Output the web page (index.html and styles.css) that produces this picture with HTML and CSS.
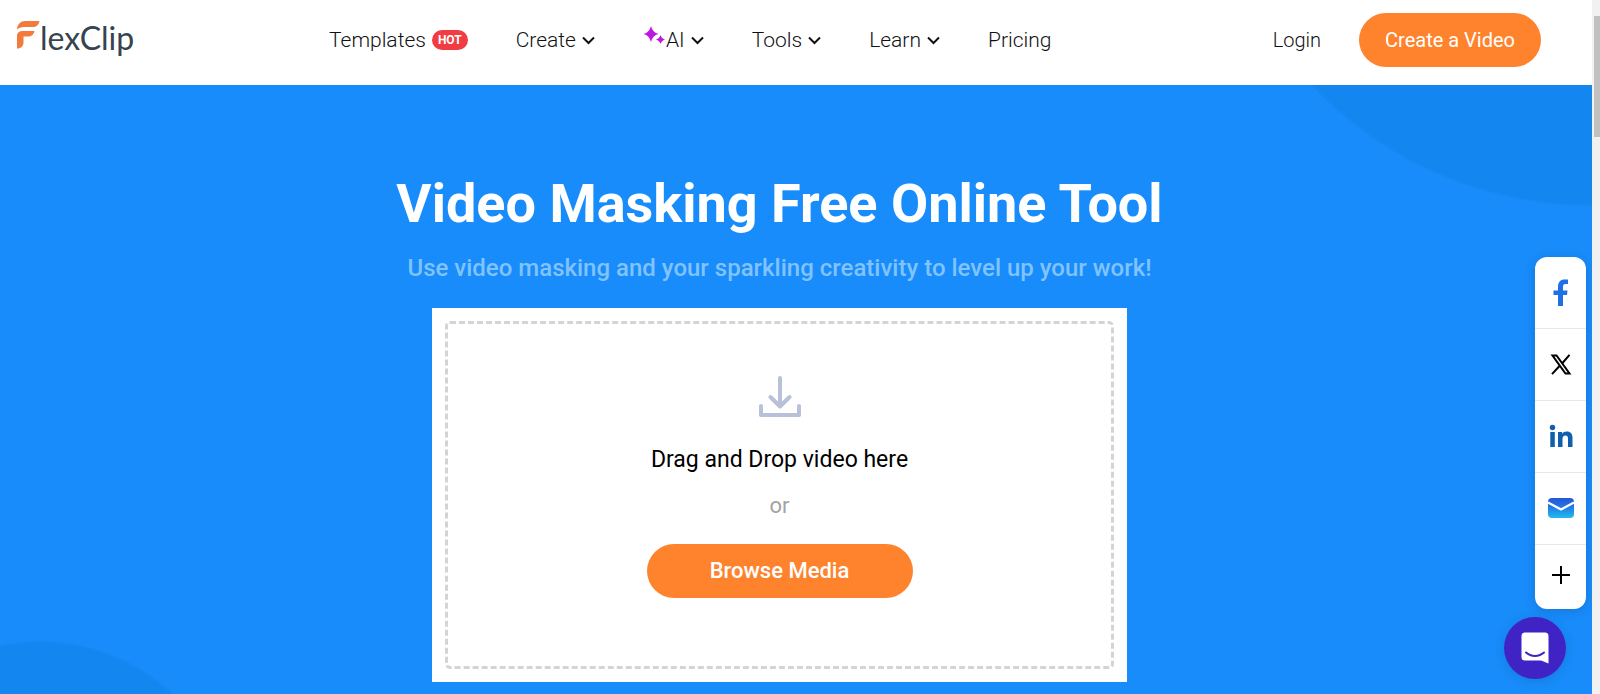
FILE: index.html
```html
<!DOCTYPE html>
<html lang="en">

<head>
    <meta charset="UTF-8">
    <meta name="viewport" content="width=device-width, initial-scale=1.0">
    <title>Video Masking Free Online Tool | FlexClip</title>
    <link rel="stylesheet" href="styles.css">
</head>

<body>
    <div class="page">
        <header class="header">
            <a class="logo" href="#" aria-label="FlexClip">
                <svg class="logo-mark" viewBox="0 0 24 30" aria-hidden="true">
                    <path fill="#f27a3a" d="M1 9.500C1.500 4 4.500 1 9.500 1H23.500C22.500 5 20.500 7 16.500 7H10C6 7 3 7.500 1 9.500Z" />
                    <path fill="#f27a3a" d="M1 28.500V16C1 12.500 3.500 11 7 11H18.500C17.500 15 15.500 16.500 12 16.500H7.500V22C7.500 26 5.500 28.500 1 28.500Z" />
                </svg>
                <span class="logo-text">lexClip</span>
            </a>
            <nav class="nav">
                <a href="#">Templates <span class="hot">HOT</span></a>
                <a href="#">Create <svg class="arrow" viewBox="0 0 13 9"><path d="M1 1.500l5.500 5.500L12 1.500" /></svg></a>
                <a href="#"><svg class="spark" viewBox="0 0 22 20"><path d="M8 0Q9.500 6.500 15.500 8Q9.500 9.500 8 16Q6.500 9.500 .5 8Q6.500 6.500 8 0Z" /><path d="M17.500 9Q18.500 12.500 22 13.500Q18.500 14.500 17.500 18Q16.500 14.500 13 13.500Q16.500 12.500 17.500 9Z" /></svg>AI <svg class="arrow" viewBox="0 0 13 9"><path d="M1 1.500l5.500 5.500L12 1.500" /></svg></a>
                <a href="#">Tools <svg class="arrow" viewBox="0 0 13 9"><path d="M1 1.500l5.500 5.500L12 1.500" /></svg></a>
                <a href="#">Learn <svg class="arrow" viewBox="0 0 13 9"><path d="M1 1.500l5.500 5.500L12 1.500" /></svg></a>
                <a href="#">Pricing</a>
            </nav>
            <div class="account">
                <a class="login" href="#">Login</a>
                <a class="btn create" href="#">Create a Video</a>
            </div>
        </header>
        <main class="hero">
            <h1>Video Masking Free Online Tool</h1>
            <p class="desc">Use video masking and your sparkling creativity to level up your work!</p>
            <section class="upload">
                <div class="drop">
                    <svg class="download" viewBox="0 0 42 42" aria-hidden="true">
                        <path d="M21 2v28M11.500 21l9.500 9.500 9.500-9.500M2 30v9h38v-9" />
                    </svg>
                    <p class="tip">Drag and Drop video here</p>
                    <p class="or">or</p>
                    <button class="btn browse" type="button">Browse Media</button>
                </div>
            </section>
        </main>
    </div>

    <div class="share">
        <a href="#" aria-label="Facebook">
            <svg viewBox="0 0 28 28"><path fill="#1f6fe5" d="M11 27V16H6.500V11.500H11V8C11 3 13.500 .5 17.500 .5H21V5H18.500C16.500 5 16 6 16 8V11.500H20.500L20 16H16V27Z" /></svg>
        </a>
        <a href="#" aria-label="X">
            <svg viewBox="0 0 28 28"><path fill="none" stroke="#000" stroke-width="2" d="M5.500 4.500h4l13 18h-4z" /><path fill="none" stroke="#000" stroke-width="2" d="M22.500 3.800L15.500 12M12.500 15L5 23.200" /></svg>
        </a>
        <a href="#" aria-label="LinkedIn">
            <svg viewBox="0 0 28 28"><g fill="#0f5faf"><circle cx="5.500" cy="4.500" r="2.700" /><path d="M3.300 9h4.500v15H3.300zM11 9h4.200v2c1-1.600 2.500-2.400 4.500-2.400 4 0 5.800 2.400 5.800 6.400v9H21v-8.200c0-2.200-.7-3.400-2.500-3.400-2 0-3 1.300-3 3.500V24H11z" /></g></svg>
        </a>
        <a href="#" aria-label="Email">
            <svg viewBox="0 0 28 28">
                <defs>
                    <linearGradient id="mail" x2="0" y2="1"><stop offset="0" stop-color="#2456d8" /><stop offset=".4" stop-color="#2673e0" /><stop offset="1" stop-color="#1fbdf2" /></linearGradient>
                </defs>
                <rect x="1" y="3" width="26" height="20" rx="4" fill="url(#mail)" />
                <path d="M1 7.500l13 7 13-7" fill="none" stroke="#fff" stroke-width="2.200" />
            </svg>
        </a>
        <button type="button" aria-label="More">
            <svg viewBox="0 0 28 28"><path d="M14 5v18M5 14h18" stroke="#000" stroke-width="2" /></svg>
        </button>
    </div>
    <button class="chat" type="button" aria-label="Open chat">
        <svg viewBox="0 0 28 32"><path fill="#fff" d="M4 .5h20a3.500 3.500 0 0 1 3.500 3.500v27.500L20 28.500H4A3.500 3.500 0 0 1 .5 25V4A3.500 3.500 0 0 1 4 .5Z" /><path d="M5 20.500c5 4.500 13 4.500 18 0" fill="none" stroke="#4023c4" stroke-width="2" stroke-linecap="round" /></svg>
    </button>
    <div class="scroll" aria-hidden="true">
        <div class="thumb"></div>
    </div>
</body>

</html>
```
FILE: styles.css
```css
* {
    margin: 0;
    padding: 0;
    box-sizing: border-box;
}

body {
    font-family: Roboto, "Liberation Sans", sans-serif;
    color: #111;
}

a {
    color: inherit;
    text-decoration: none;
}

button {
    border: none;
    font-family: inherit;
    cursor: pointer;
}

.page {
    display: flex;
    flex-direction: column;
    min-height: 100vh;
    padding-right: 8px;
}

/* header */
.header {
    display: flex;
    align-items: center;
    height: 85px;
    padding: 0 51px 5px 16px;
    background: #fff;
}

.logo {
    display: flex;
    align-items: flex-start;
    width: 313px;
    height: 40px;
}

.logo-mark {
    width: 24px;
    height: 30px;
}

.logo-text {
    font-family: Lato, sans-serif;
    font-size: 32px;
    line-height: 36px;
    color: #35444e;
}

.nav {
    display: flex;
    gap: 48px;
    font-size: 21px;
    font-weight: 300;
}

.nav a {
    display: flex;
    align-items: center;
    gap: 6px;
}

.hot {
    padding: 0 6px;
    border-radius: 10px;
    background: #f03c42;
    color: #fff;
    font-size: 12px;
    font-weight: 700;
    line-height: 20px;
}

.arrow {
    width: 13px;
    height: 9px;
    fill: none;
    stroke: #111;
    stroke-width: 2;
}

.spark {
    width: 22px;
    height: 20px;
    margin: 0 -5px 8px 0;
    fill: #bd18e0;
}

.account {
    display: flex;
    align-items: center;
    gap: 38px;
    margin-left: auto;
    font-size: 20px;
}

.login {
    font-weight: 300;
}

.btn {
    border-radius: 27px;
    background: #ff832d;
    color: #fff;
    line-height: 54px;
    text-align: center;
}

.create {
    padding: 0 26px;
}

/* hero */
.hero {
    flex: 1;
    display: flex;
    flex-direction: column;
    align-items: center;
    padding: 87px 33px 12px 0;
    background:
        radial-gradient(circle at 100% -267px, #1486ef 386px, transparent 389px),
        radial-gradient(circle at 40px 750px, #1486ef 192px, transparent 195px),
        #188cfb;
}

.hero h1 {
    color: #fff;
    font-size: 54px;
    font-weight: 700;
    line-height: 64px;
}

.desc {
    margin: 16px 0 24px;
    color: #80c3ff;
    font-size: 24px;
    font-weight: 500;
    line-height: 32px;
}

.upload {
    display: flex;
    width: 695px;
    max-width: 100%;
    padding: 13px;
    background: #fff;
}

.drop {
    flex: 1;
    display: flex;
    flex-direction: column;
    align-items: center;
    padding: 52px 20px 68px;
    border: 3px dashed #d4d4d8;
    border-radius: 5px;
}

.download {
    width: 42px;
    height: 42px;
    fill: none;
    stroke: #b9c1d8;
    stroke-width: 4;
    stroke-linecap: round;
    stroke-linejoin: round;
}

.tip {
    margin-top: 26px;
    color: #000;
    font-size: 23px;
    line-height: 32px;
}

.or {
    margin: 14px 0 22px;
    color: #a3a3a3;
    font-size: 22px;
    line-height: 32px;
}

.browse {
    width: 266px;
    font-size: 22px;
    font-weight: 500;
}

/* share bar */
.share {
    position: fixed;
    top: 257px;
    right: 14px;
    width: 51px;
    border-radius: 12px;
    background: #fff;
    box-shadow: 0 2px 12px rgba(0, 0, 0, 0.15);
}

.share a,
.share button {
    display: flex;
    align-items: center;
    justify-content: center;
    width: 100%;
    height: 72px;
    border-bottom: 1px solid #e6e9ec;
    background: none;
}

.share button {
    height: 64px;
    padding-bottom: 4px;
    border-bottom: none;
}

.share svg {
    width: 28px;
    height: 28px;
}

.chat {
    position: fixed;
    right: 34px;
    bottom: 15px;
    display: flex;
    align-items: center;
    justify-content: center;
    width: 62px;
    height: 62px;
    border-radius: 50%;
    background: #4023c4;
    box-shadow: 0 2px 12px rgba(0, 0, 0, 0.12);
}

.chat svg {
    width: 28px;
    height: 32px;
}

.scroll {
    position: fixed;
    top: 0;
    right: 0;
    bottom: 0;
    width: 8px;
    padding: 16px 0 0 2px;
    background: #f1f1f1;
}

.thumb {
    height: 121px;
    background: #c1c1c1;
}
```
